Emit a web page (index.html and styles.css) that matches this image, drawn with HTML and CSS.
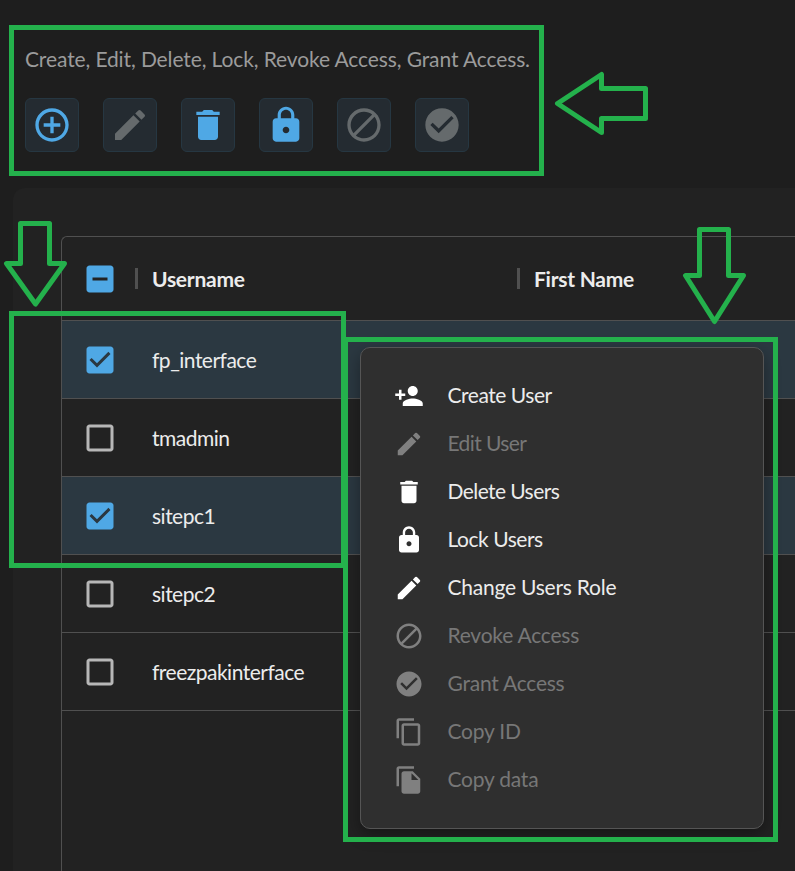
FILE: index.html
```html
<!DOCTYPE html>
<html lang="en">
<head>
<meta charset="utf-8">
<title>Users</title>
<link rel="stylesheet" href="styles.css">
</head>
<body>
<svg class="sprite" aria-hidden="true">
<symbol id="add" viewBox="0 0 24 24"><path d="M13 7h-2v4H7v2h4v4h2v-4h4v-2h-4zm-1-5C6.48 2 2 6.48 2 12s4.48 10 10 10 10-4.48 10-10S17.52 2 12 2m0 18c-4.41 0-8-3.59-8-8s3.59-8 8-8 8 3.59 8 8-3.59 8-8 8"/></symbol>
<symbol id="edit" viewBox="0 0 24 24"><path d="M3 17.25V21h3.75L17.81 9.94l-3.75-3.75zM20.71 7.04c.39-.39.39-1.02 0-1.41l-2.34-2.34a.9959.9959 0 0 0-1.41 0l-1.83 1.83 3.75 3.75z"/></symbol>
<symbol id="delete" viewBox="0 0 24 24"><path d="M6 19c0 1.1.9 2 2 2h8c1.1 0 2-.9 2-2V7H6zM19 4h-3.5l-1-1h-5l-1 1H5v2h14z"/></symbol>
<symbol id="lock" viewBox="0 0 24 24"><path d="M18 8h-1V6c0-2.76-2.24-5-5-5S7 3.24 7 6v2H6c-1.1 0-2 .9-2 2v10c0 1.1.9 2 2 2h12c1.1 0 2-.9 2-2V10c0-1.1-.9-2-2-2m-6 9c-1.1 0-2-.9-2-2s.9-2 2-2 2 .9 2 2-.9 2-2 2m3.100-9H8.900V6c0-1.710 1.390-3.100 3.100-3.100s3.100 1.390 3.100 3.100z"/></symbol>
<symbol id="block" viewBox="0 0 24 24"><path d="M12 2C6.500 2 2 6.500 2 12s4.500 10 10 10 10-4.500 10-10S17.500 2 12 2M4 12c0-4.400 3.600-8 8-8 1.800 0 3.500.6 4.900 1.700L5.700 16.900C4.600 15.500 4 13.800 4 12m8 8c-1.800 0-3.500-.6-4.900-1.700L18.300 7.100C19.400 8.500 20 10.200 20 12c0 4.400-3.600 8-8 8"/></symbol>
<symbol id="grant" viewBox="0 0 24 24"><path d="M12 2C6.480 2 2 6.480 2 12s4.480 10 10 10 10-4.480 10-10S17.520 2 12 2m-2 15-5-5 1.410-1.410L10 14.170l7.590-7.590L19 8z"/></symbol>
<symbol id="person" viewBox="0 0 24 24"><path d="M15 12c2.210 0 4-1.790 4-4s-1.790-4-4-4-4 1.790-4 4 1.790 4 4 4m-9-2V7H4v3H1v2h3v3h2v-3h3v-2zm9 4c-2.670 0-8 1.340-8 4v2h16v-2c0-2.660-5.330-4-8-4"/></symbol>
<symbol id="copy" viewBox="0 0 24 24"><path d="M16 1H4c-1.100 0-2 .9-2 2v14h2V3h12zm3 4H8c-1.100 0-2 .9-2 2v14c0 1.100.9 2 2 2h11c1.100 0 2-.9 2-2V7c0-1.100-.9-2-2-2m0 16H8V7h11z"/></symbol>
<symbol id="file" viewBox="0 0 24 24"><path d="M16 1H4c-1.100 0-2 .9-2 2v14h2V3h12zm-1 4 6 6v10c0 1.100-.9 2-2 2H7.990C6.890 23 6 22.100 6 21l.01-14c0-1.100.89-2 1.990-2zm-1 7h5.500L14 6.500z"/></symbol>
<symbol id="some" viewBox="0 0 24 24"><path d="M19 3H5c-1.100 0-2 .9-2 2v14c0 1.100.9 2 2 2h14c1.100 0 2-.9 2-2V5c0-1.100-.9-2-2-2m-2 10H7v-2h10z"/></symbol>
<symbol id="on" viewBox="0 0 24 24"><path d="M19 3H5c-1.110 0-2 .9-2 2v14c0 1.100.89 2 2 2h14c1.110 0 2-.9 2-2V5c0-1.100-.89-2-2-2m-9 14-5-5 1.410-1.410L10 14.170l7.590-7.590L19 8z"/></symbol>
<symbol id="off" viewBox="0 0 24 24"><path d="M19 5v14H5V5zm0-2H5c-1.100 0-2 .9-2 2v14c0 1.100.9 2 2 2h14c1.100 0 2-.9 2-2V5c0-1.100-.9-2-2-2"/></symbol>
</svg>

<header class="top">
  <p class="caption">Create, Edit, Delete, Lock, Revoke Access, Grant Access.</p>
  <div class="toolbar">
    <button class="tool"><svg><use href="#add"/></svg></button>
    <button class="tool muted"><svg><use href="#edit"/></svg></button>
    <button class="tool"><svg><use href="#delete"/></svg></button>
    <button class="tool"><svg><use href="#lock"/></svg></button>
    <button class="tool muted"><svg><use href="#block"/></svg></button>
    <button class="tool muted"><svg><use href="#grant"/></svg></button>
  </div>
</header>

<main class="panel">
  <div class="grid">
    <div class="row head">
      <svg class="check blue"><use href="#some"/></svg>
      <div class="col first"><span>Username</span></div>
      <div class="col"><span>First Name</span></div>
    </div>
    <div class="row selected"><svg class="check blue"><use href="#on"/></svg><span>fp_interface</span></div>
    <div class="row"><svg class="check"><use href="#off"/></svg><span>tmadmin</span></div>
    <div class="row selected"><svg class="check blue"><use href="#on"/></svg><span>sitepc1</span></div>
    <div class="row"><svg class="check"><use href="#off"/></svg><span>sitepc2</span></div>
    <div class="row"><svg class="check"><use href="#off"/></svg><span>freezpakinterface</span></div>
  </div>
</main>

<div class="menu">
  <div class="item"><svg><use href="#person"/></svg><span>Create User</span></div>
  <div class="item off tight"><svg><use href="#edit"/></svg><span>Edit User</span></div>
  <div class="item tight"><svg><use href="#delete"/></svg><span>Delete Users</span></div>
  <div class="item"><svg><use href="#lock"/></svg><span>Lock Users</span></div>
  <div class="item loose"><svg><use href="#edit"/></svg><span>Change Users Role</span></div>
  <div class="item off loose"><svg><use href="#block"/></svg><span>Revoke Access</span></div>
  <div class="item off loose"><svg><use href="#grant"/></svg><span>Grant Access</span></div>
  <div class="item off loose"><svg><use href="#copy"/></svg><span>Copy ID</span></div>
  <div class="item off loose"><svg><use href="#file"/></svg><span>Copy data</span></div>
</div>

<svg class="marks" viewBox="0 0 795 871">
  <rect x="11.500" y="27.500" width="530" height="146"/>
  <rect x="11.500" y="313.500" width="332" height="252"/>
  <rect x="345.500" y="339.500" width="430" height="500"/>
  <g stroke-linejoin="round">
    <path d="M557.500 103.500 601.500 74.500V88.500H645.500V118.500H601.500V132.500Z"/>
    <path d="M20.500 223.500H49.500V263.500H64.500L35.500 304 6.500 263.500H20.500Z"/>
    <path d="M699.500 229.500H728.500V275.500H743.500L714.500 321.500 685.500 275.500H699.500Z"/>
  </g>
</svg>
</body>
</html>
```
FILE: styles.css
```css
* { box-sizing: border-box; }
body { margin: 0; height: 871px; overflow: hidden; position: relative; background: #1e1e1e; color: #ececec; font: 400 21px/30px Lato, "Liberation Sans", sans-serif; }
.sprite { display: none; }
svg { fill: currentColor; flex: none; }
.top { height: 188px; padding: 44px 25px 0; }
.caption { margin: 0; color: #9b9b9b; white-space: nowrap; letter-spacing: -.11px; }
.toolbar { display: flex; gap: 24px; margin-top: 24px; }
.tool { width: 54px; height: 54px; padding: 0; display: grid; place-items: center; background: #242b31; border: 1px solid #263742; border-radius: 6px; color: #4fa8e5; }
.tool svg { width: 40px; height: 40px; }
.tool.muted { color: #656a6c; }
.panel { margin-left: 13px; height: 683px; padding: 48px 0 0 48px; background: #222; border-top-left-radius: 12px; }
.grid { height: 635px; border: solid #505050; border-width: 1px 0 0 1px; border-top-left-radius: 6px; overflow: hidden; }
.row { height: 78px; padding-left: 20px; display: flex; align-items: center; gap: 34px; border-bottom: 1px solid #505050; letter-spacing: -.5px; }
.head { height: 84px; gap: 17px; font-weight: 700; letter-spacing: -.25px; }
.selected { background: #2b3841; }
.check { width: 36px; height: 36px; color: #b7b7b7; }
.check.blue { color: #4fa8e5; }
.col { display: flex; align-items: center; gap: 14px; }
.col::before { content: ""; width: 3px; height: 21px; background: #505050; }
.first { width: 365px; }
.menu { position: absolute; left: 360px; top: 347px; width: 404px; height: 482px; padding: 24px 33px; background: #2f2f2f; border: 1px solid #555; border-radius: 10px; box-shadow: 0 6px 16px rgba(0,0,0,.35); }
.item { height: 48px; display: flex; align-items: center; gap: 23.5px; letter-spacing: -.46px; }
.item span { padding-bottom: 2px; }
.item.tight { letter-spacing: -.58px; }
.item.loose { letter-spacing: -.23px; }
.item svg { width: 30px; height: 30px; color: #fff; }
.item.off { color: #777; }
.item.off svg { color: #808080; }
.marks { position: absolute; left: 0; top: 0; width: 795px; height: 871px; fill: none; stroke: #24b14c; stroke-width: 5; }
```
